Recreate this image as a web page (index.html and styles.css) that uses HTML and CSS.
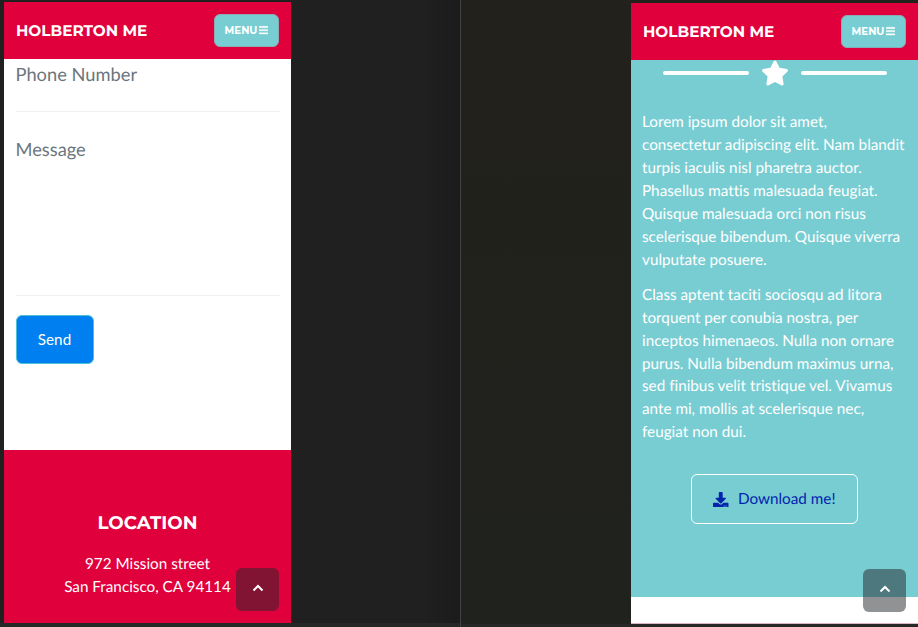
FILE: index.html
```html
<!DOCTYPE html>
<html lang="en">
<head>
<meta charset="utf-8">
<title>Holberton Me</title>
<link rel="stylesheet" href="styles.css">
</head>
<body>
<svg class="sprite" aria-hidden="true">
  <symbol id="bars" viewBox="0 0 448 512"><path d="M16 132h416c8.837 0 16-7.163 16-16V76c0-8.837-7.163-16-16-16H16C7.163 60 0 67.163 0 76v40c0 8.837 7.163 16 16 16zm0 160h416c8.837 0 16-7.163 16-16v-40c0-8.837-7.163-16-16-16H16c-8.837 0-16 7.163-16 16v40c0 8.837 7.163 16 16 16zm0 160h416c8.837 0 16-7.163 16-16v-40c0-8.837-7.163-16-16-16H16c-8.837 0-16 7.163-16 16v40c0 8.837 7.163 16 16 16z"/></symbol>
  <symbol id="chevron" viewBox="0 0 12 8"><path d="M1.5 6.5 6 2l4.500 4.500" fill="none" stroke="currentColor" stroke-width="2"/></symbol>
</svg>
<div class="screen">
  <section class="pane pane-left">
    <div class="phone">
      <header class="nav">
        <span class="brand">HOLBERTON ME</span>
        <button class="menu"><span class="menu-label">MENU</span><svg class="bars"><use href="#bars"/></svg></button>
      </header>
      <main class="contact">
        <div class="field phone-field">Phone Number</div>
        <div class="field message-field">Message</div>
        <button class="send">Send</button>
      </main>
      <footer class="footer">
        <h4 class="footer-title">LOCATION</h4>
        <p class="address">972 Mission street<br>San Francisco, CA 94114</p>
      </footer>
      <a class="to-top"><svg class="chevron"><use href="#chevron"/></svg></a>
    </div>
  </section>
  <section class="pane pane-right">
    <div class="phone">
      <header class="nav">
        <span class="brand">HOLBERTON ME</span>
        <button class="menu"><span class="menu-label">MENU</span><svg class="bars"><use href="#bars"/></svg></button>
      </header>
      <main class="about">
        <div class="divider">
          <span class="line"></span>
          <svg class="star" viewBox="0 0 576 512"><path d="M259.3 17.8L194 150.2 47.9 171.5c-26.2 3.8-36.7 36.1-17.7 54.6l105.7 103-25 145.5c-4.5 26.3 23.2 46 46.4 33.7L288 439.6l130.7 68.7c23.2 12.2 50.9-7.4 46.4-33.7l-25-145.5 105.7-103c19-18.5 8.5-50.8-17.7-54.6L382 150.2 316.7 17.8c-11.7-23.6-45.6-23.9-57.4 0z"/></svg>
          <span class="line"></span>
        </div>
        <p class="lead">Lorem ipsum dolor sit amet,<br>consectetur adipiscing elit. Nam blandit<br>turpis iaculis nisl pharetra auctor.<br>Phasellus mattis malesuada feugiat.<br>Quisque malesuada orci non risus<br>scelerisque bibendum. Quisque viverra<br>vulputate posuere.</p>
        <p class="lead">Class aptent taciti sociosqu ad litora<br>torquent per conubia nostra, per<br>inceptos himenaeos. Nulla non ornare<br>purus. Nulla bibendum maximus urna,<br>sed finibus velit tristique vel. Vivamus<br>ante mi, mollis at scelerisque nec,<br>feugiat non dui.</p>
        <a class="download"><svg class="download-icon" viewBox="0 0 512 512"><path d="M216 0h80c13.3 0 24 10.7 24 24v168h87.7c17.8 0 26.7 21.5 14.1 34.1L269.7 378.3c-7.5 7.5-19.800 7.5-27.3 0L90.1 226.1c-12.6-12.6-3.7-34.1 14.1-34.1H192V24c0-13.3 10.7-24 24-24zm296 376v112c0 13.3-10.7 24-24 24H24c-13.3 0-24-10.7-24-24V376c0-13.3 10.7-24 24-24h146.7l49 49c20.1 20.1 52.5 20.1 72.6 0l49-49H488c13.3 0 24 10.7 24 24zm-124 88c0-11-9-20-20-20s-20 9-20 20 9 20 20 20 20-9 20-20zm64 0c0-11-9-20-20-20s-20 9-20 20 9 20 20 20 20-9 20-20z"/></svg><span>Download me!</span></a>
      </main>
      <a class="to-top"><svg class="chevron"><use href="#chevron"/></svg></a>
    </div>
  </section>
</div>
</body>
</html>
```
FILE: styles.css
```css
* { box-sizing: border-box; }
body {
  margin: 0;
  overflow: hidden;
  background: #272727;
  font-family: Lato, "Liberation Sans", sans-serif;
  font-size: 15.27px;
  line-height: 23px;
  font-variant-ligatures: none;
  text-rendering: geometricPrecision;
}
.sprite { position: absolute; width: 0; height: 0; }
svg { display: block; fill: currentColor; }
button { margin: 0; padding: 0; font: inherit; color: #fff; }
.screen { display: flex; width: 918px; height: 627px; }
.pane { display: flex; }
.pane-left {
  width: 461px;
  padding: 2px 0 0 4px;
  border-right: 1px solid #434343;
  background: linear-gradient(90deg, #202020 0, #202020 420px, #1b1b1b 460px) 0 0 / 100% 623px no-repeat;
}
.pane-right {
  width: 457px;
  padding: 3px 0 0 170px;
  background: linear-gradient(#22211c, #20221d) 0 0 / 100% 624px no-repeat;
}
.phone {
  position: relative;
  display: flex;
  flex-direction: column;
  width: 287px;
  height: 621px;
  background: #fff;
}
.pane-right .phone { border-bottom: 1px solid #dfb5bf; }
.nav {
  display: flex;
  align-items: center;
  justify-content: space-between;
  flex: none;
  height: 57px;
  padding: 0 12px;
  background: #e0003c;
  color: #fff;
}
.brand, .menu-label, .footer-title {
  font-family: Montserrat, Lato, sans-serif;
  font-weight: 700;
  white-space: nowrap;
}
.brand { font-size: 15.3px; }
.menu {
  display: flex;
  align-items: center;
  justify-content: center;
  gap: 2px;
  width: 65px;
  height: 33px;
  border: 1px solid #8aaab5;
  border-radius: 6px;
  background: #78cdd2;
}
.menu-label { font-size: 10.2px; }
.bars { width: 9px; height: 10.3px; stroke: currentColor; stroke-width: 14px; }
.contact { flex: none; height: 391px; padding: 0 11.500px; }
.field {
  border-bottom: 1px solid #f0f1f2;
  color: #6c757d;
  font-size: 18.3px;
  line-height: 28px;
}
.phone-field { height: 53px; padding-top: 1px; }
.message-field { height: 184px; padding-top: 23px; }
.send {
  display: block;
  width: 78px;
  height: 49px;
  margin-top: 19px;
  border: 1px solid #4dbfd8;
  border-radius: 6px;
  background: #007ff0;
}
.footer {
  flex: 1;
  padding-top: 61px;
  background: #e0003c;
  color: #fff;
  text-align: center;
}
.footer-title { margin: 0 0 18px; font-size: 18.3px; line-height: 24px; }
.address { margin: 0; }
.to-top {
  position: absolute;
  right: 12px;
  bottom: 12px;
  display: flex;
  align-items: center;
  justify-content: center;
  width: 43px;
  height: 43px;
  padding-bottom: 4px;
  border-radius: 6px;
  background: rgba(33, 37, 41, 0.5);
  color: #fff;
}
.pane-right .to-top { bottom: 11px; }
.chevron { width: 12px; height: 8px; }
.about {
  display: flex;
  flex-direction: column;
  flex: none;
  height: 537px;
  padding: 1px 11px 0;
  background: #78cdd2;
  color: #fff;
}
.divider {
  display: flex;
  align-items: center;
  justify-content: center;
  gap: 12px;
  height: 24px;
  margin-bottom: 26px;
}
.line { width: 86px; height: 4px; border-radius: 4px; background: #fff; }
.star { width: 28px; height: 26px; }
.lead { margin: 0 0 12px; line-height: 22.95px; white-space: nowrap; }
.download {
  display: flex;
  align-items: center;
  justify-content: center;
  align-self: center;
  gap: 9px;
  width: 167px;
  height: 50px;
  margin-top: 18px;
  border: 1.500px solid #fff;
  border-radius: 6px;
  color: #0224ad;
}
.download-icon { width: 15.5px; height: 15.5px; }
```
